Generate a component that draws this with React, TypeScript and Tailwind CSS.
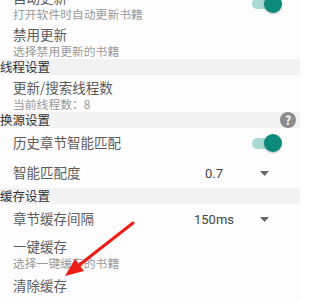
import React from 'react';

const font = { fontFamily: '"Noto Sans CJK SC", "Noto Sans", sans-serif' };

function Toggle() {
    return (
        <div className="relative w-[30px] h-[18px] flex items-center">
            <div className="w-[27px] h-[11px] rounded-full bg-[#a9dad4]" />
            <div className="absolute right-0 w-[18px] h-[18px] rounded-full bg-[#0d8a7b] shadow-[0_1px_2px_rgba(0,0,0,0.25)]" />
        </div>
    );
}

function Caret() {
    return (
        <svg width="9" height="5" viewBox="0 0 9 5">
            <path d="M0 0 L9 0 L4.5 5 Z" fill="#666" />
        </svg>
    );
}

function Header({ title, help }: { title: string; help?: boolean }) {
    return (
        <div className="h-[16px] bg-[#f2f2f2] flex items-center justify-between pr-[4px]">
            <span className="text-[12.5px] leading-none text-[#333]">{title}</span>
            {help && (
                <div className="w-[16px] h-[16px] rounded-full bg-[#8c8c8c] flex items-center justify-center text-white text-[12px] font-bold leading-none">?</div>
            )}
        </div>
    );
}

function TwoLine({ title, sub, right }: { title: string; sub: string; right?: React.ReactNode }) {
    return (
        <div className="h-[37px] flex items-center justify-between pl-[13px] pr-[18px]">
            <div className="flex flex-col self-start pt-[4px]">
                <span className="text-[13.5px] leading-[16px] text-[#5c5c5c]">{title}</span>
                <span className="mt-[2px] text-[11.8px] leading-[14px] text-[#9a9a9a]">{sub}</span>
            </div>
            {right}
        </div>
    );
}

function OneLine({ title, right }: { title: string; right?: React.ReactNode }) {
    return (
        <div className="h-[30px] flex items-center justify-between pl-[13px] pr-[18px]">
            <span className="text-[13.5px] leading-none text-[#5c5c5c]">{title}</span>
            {right}
        </div>
    );
}

function Select({ value }: { value: string }) {
    return (
        <div className="w-[112px] flex items-center">
            <span className="w-[88px] text-center text-[13px] leading-none text-[#444]" style={{ fontFamily: 'Roboto, sans-serif' }}>{value}</span>
            <div className="ml-[2px]">
                <Caret />
            </div>
        </div>
    );
}

export default function App() {
    return (
        <div className="relative w-[300px] h-[300px] overflow-hidden bg-[#fdfdfd]" style={font}>
            <div className="flex flex-col -mt-[15px]">
                <TwoLine title="自动更新" sub="打开软件时自动更新书籍" right={<Toggle />} />
                <TwoLine title="禁用更新" sub="选择禁用更新的书籍" />
                <Header title="线程设置" />
                <TwoLine title="更新/搜索线程数" sub="当前线程数：8" />
                <Header title="换源设置" help />
                <OneLine title="历史章节智能匹配" right={<Toggle />} />
                <OneLine title="智能匹配度" right={<Select value="0.7" />} />
                <Header title="缓存设置" />
                <OneLine title="章节缓存间隔" right={<Select value="150ms" />} />
                <TwoLine title="一键缓存" sub="选择一键缓存的书籍" />
                <OneLine title="清除缓存" />
            </div>
            {/* red annotation arrow */}
            <svg className="absolute left-0 top-0" width="300" height="300" viewBox="0 0 300 300">
                <line x1="133" y1="223" x2="78" y2="266" stroke="#ec1c17" strokeWidth="3" strokeLinecap="round" />
                <path d="M65 276 L84 271 L75 259 Z" fill="#ec1c17" />
            </svg>
        </div>
    );
}
